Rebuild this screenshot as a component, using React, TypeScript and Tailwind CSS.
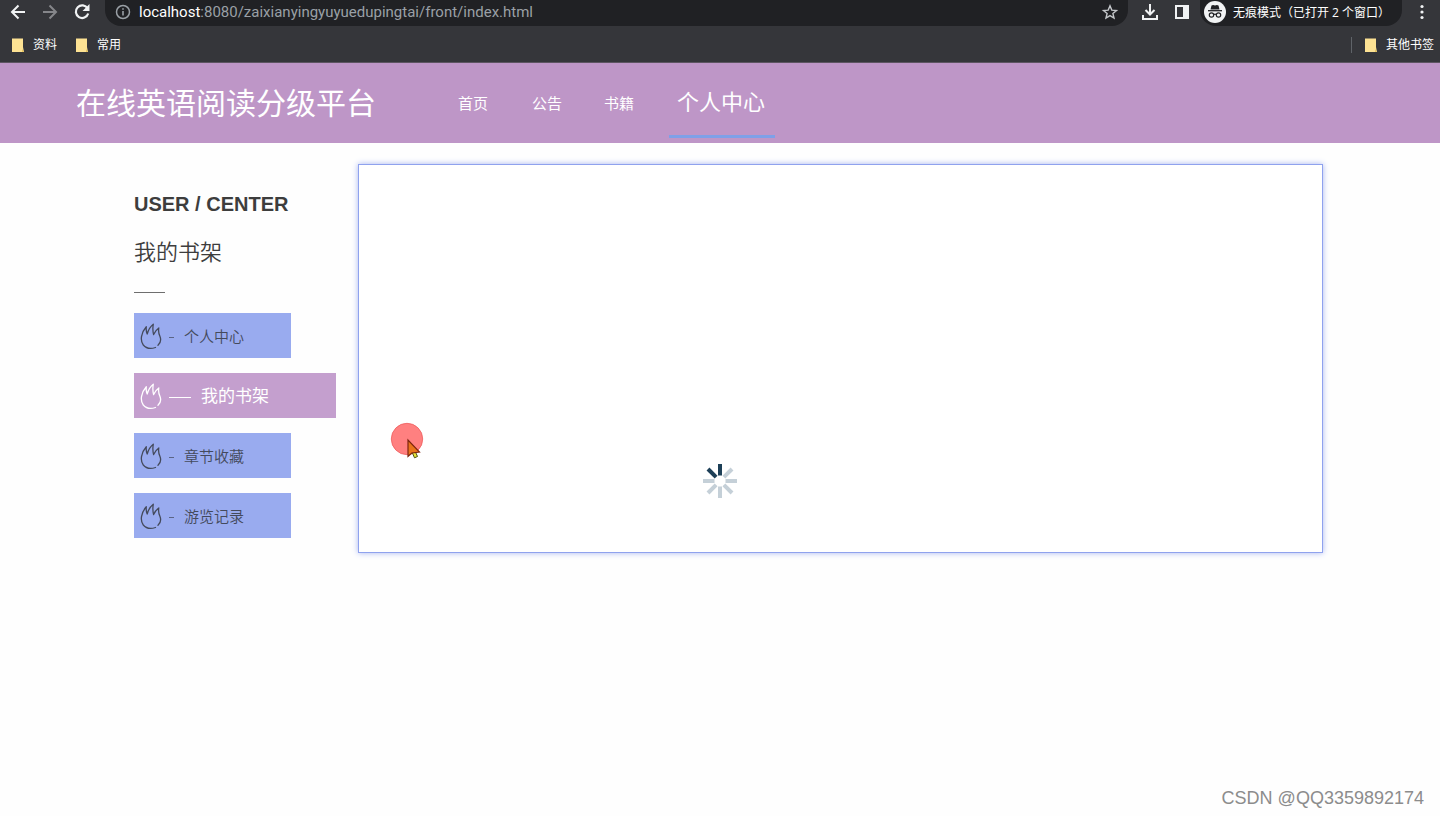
import React from "react";

const cjk = "font-['Open_Sans','Noto_Sans_CJK_SC',sans-serif]";

function Folder() {
  return (
    <svg width="14" height="16" viewBox="0 0 14 16" aria-hidden="true">
      <path d="M1 1.500H12V10L13 15H1Z" fill="#fde293" />
      <path d="M11 12L13 15H11Z" fill="#e8c45c" />
    </svg>
  );
}

function Bookmark({ label }: { label: string }) {
  return (
    <a href="#bookmark" className="flex items-center gap-2 text-xs leading-5 text-white">
      <Folder />
      <span>{label}</span>
    </a>
  );
}

function BrowserBar() {
  return (
    <div className="h-[63px] overflow-hidden border-b border-[#5d5562] bg-[#35363a] text-white">
      <div className="flex h-[26px] items-center">
        <div className="flex w-[105px] shrink-0 items-center gap-3 pb-[2px] pl-2">
          <button type="button" aria-label="后退">
            <svg width="20" height="20" viewBox="0 0 20 20" fill="none" stroke="#f1f3f4" strokeWidth="2">
              <path d="M17 10H4M10.500 3.500L4 10L10.500 16.500" />
            </svg>
          </button>
          <button type="button" aria-label="前进">
            <svg width="20" height="20" viewBox="0 0 20 20" fill="none" stroke="#85868a" strokeWidth="2">
              <path d="M3 10H16M9.500 3.500L16 10L9.500 16.500" />
            </svg>
          </button>
          <button type="button" aria-label="重新加载">
            <svg width="20" height="20" viewBox="0 0 20 20" fill="none">
              <path d="M15.600 6.500A6.300 6.300 0 1 0 16.200 11.500" stroke="#f1f3f4" strokeWidth="2.200" />
              <path d="M17.500 2V9H10.500Z" fill="#f1f3f4" />
            </svg>
          </button>
        </div>
        <div className="flex h-[26px] min-w-0 flex-1 items-center rounded-b-2xl bg-[#202124] pb-[2px] pl-[10px] pr-2">
          <svg width="16" height="16" viewBox="0 0 16 16" fill="none" className="shrink-0" aria-hidden="true">
            <circle cx="8" cy="8" r="6.500" stroke="#9aa0a6" strokeWidth="1.500" />
            <path d="M8 7V11.500M8 4.200V5.800" stroke="#9aa0a6" strokeWidth="1.600" />
          </svg>
          <div className="min-w-0 flex-1 truncate pl-2 font-['Roboto',sans-serif] text-[15px] leading-6 text-[#9aa0a6]">
            <span className="text-white">localhost</span>:8080/zaixianyingyuyuedupingtai/front/index.html
          </div>
          <button type="button" aria-label="为此页添加书签">
            <svg width="20" height="20" viewBox="0 0 20 20" fill="none" stroke="#c4c7ca" strokeWidth="1.400">
              <path d="M10 3.800L11.800 8.100L16.500 8.500L12.900 11.500L14 16L10 13.600L6 16L7.100 11.500L3.500 8.500L8.200 8.100Z" />
            </svg>
          </button>
        </div>
        <div className="flex h-[26px] shrink-0 items-center pb-[2px] pl-3">
          <button type="button" aria-label="下载内容">
            <svg width="20" height="20" viewBox="0 0 20 20" fill="none" stroke="#f1f3f4" strokeWidth="2">
              <path d="M10 2V12M5.500 8L10 12.500L14.500 8M3 13V17H17V13" />
            </svg>
          </button>
          <button type="button" aria-label="侧边栏" className="pl-3">
            <svg width="20" height="20" viewBox="0 0 20 20">
              <path d="M3 3H17V17H3ZM5 5V15H11V5Z" fill="#f1f3f4" fillRule="evenodd" />
            </svg>
          </button>
        </div>
        <button
          type="button"
          className="ml-2 flex h-[26px] w-[202px] shrink-0 items-center gap-[7px] rounded-b-2xl bg-[#202124] pb-[2px] pl-1 text-xs leading-5"
        >
          <svg width="22" height="22" viewBox="0 0 22 22" className="shrink-0" aria-hidden="true">
            <circle cx="11" cy="11" r="11" fill="#f1f3f4" />
            <path d="M7.500 4.500Q9 3.700 11 4.500Q13 3.700 14.500 4.500L15.500 8.500H6.500Z" fill="#202124" />
            <path d="M4 9.700H18" stroke="#202124" strokeWidth="1.300" />
            <g fill="none" stroke="#202124" strokeWidth="1.200">
              <circle cx="7.500" cy="14" r="2.200" />
              <circle cx="14.500" cy="14" r="2.200" />
              <path d="M9.700 13.600Q11 12.800 12.300 13.600" />
            </g>
          </svg>
          <span className="whitespace-nowrap pt-[2px]">无痕模式（已打开 2 个窗口）</span>
        </button>
        <button type="button" aria-label="菜单" className="flex w-[38px] shrink-0 justify-center pb-[2px] pl-[2px]">
          <svg width="20" height="20" viewBox="0 0 20 20" fill="#f1f3f4">
            <circle cx="10" cy="4.500" r="1.600" />
            <circle cx="10" cy="10" r="1.600" />
            <circle cx="10" cy="15.500" r="1.600" />
          </svg>
        </button>
      </div>
      <div className="flex h-9 items-center gap-[18px] pl-[11px] pr-[6px] pt-px">
        <Bookmark label="资料" />
        <Bookmark label="常用" />
        <div className="ml-auto flex items-center gap-3">
          <span className="h-4 w-px bg-[#5f6368]" />
          <Bookmark label="其他书签" />
        </div>
      </div>
    </div>
  );
}

function SiteHeader() {
  return (
    <header className="flex h-20 items-center bg-[#be96c7] pl-[76px] text-white">
      <h1 className="w-[364px] shrink-0 text-[30px] leading-10">在线英语阅读分级平台</h1>
      <nav className="flex h-20 items-center text-[15px] leading-6">
        <a href="#home" className="w-[74px] pl-[18px]">首页</a>
        <a href="#notice" className="w-[74px] pl-[18px]">公告</a>
        <a href="#books" className="w-[74px] pl-4">书籍</a>
        <a
          href="#center"
          aria-current="page"
          className="ml-[7px] flex h-[75px] w-[106px] items-center self-start border-b-3 border-[#7ea0e8] pl-2 pt-1 text-[22px] leading-8"
        >
          个人中心
        </a>
      </nav>
    </header>
  );
}

function Flame() {
  return (
    <svg
      width="24"
      height="28"
      viewBox="0 0 24 28"
      fill="none"
      stroke="currentColor"
      strokeWidth="1.300"
      strokeLinecap="round"
      strokeLinejoin="round"
      className="shrink-0"
      aria-hidden="true"
    >
      <path d="M16.500 25.500C12 27 7 26.300 4.300 23C1 18.500 1.800 11 7.300 4.800Q6.800 8.500 8.200 12Q10 5.500 14.300 2.200Q13.300 7.500 14.600 12.500Q16.300 8.500 19.800 6Q19 10.500 21 14.500C22.300 18 21.500 21 19 23.200" />
    </svg>
  );
}

function SideLink({ label, active = false }: { label: string; active?: boolean }) {
  return (
    <a
      href="#section"
      aria-current={active ? "page" : undefined}
      className={
        active
          ? "flex h-[45px] w-[202px] items-center bg-[#c49fce] pl-[5px] text-[17px] leading-6 text-white"
          : "flex h-[45px] w-[157px] items-center bg-[#99abef] pl-[5px] text-[15px] leading-6 text-[#444a5c]"
      }
    >
      <Flame />
      <span
        className={
          active ? "ml-[6px] mr-[10px] mt-1 h-px w-[22px] bg-white" : "ml-[6px] mr-[10px] mt-1 h-px w-[5px] bg-[#5a6486]"
        }
      />
      <span className={active ? "" : "font-[350]"}>{label}</span>
    </a>
  );
}

function Spinner() {
  const spokes = [0, 45, 90, 135, 180, 225, 270, 315];
  return (
    <svg width="34" height="34" viewBox="0 0 34 34" role="img" aria-label="加载中">
      {spokes.map((a) => (
        <rect
          key={a}
          x="15"
          y="0"
          width="4"
          height="11.500"
          fill={a === 0 || a === 315 ? "#1d3f57" : "#c5d0d8"}
          transform={`rotate(${a} 17 17)`}
        />
      ))}
    </svg>
  );
}

function Pointer() {
  return (
    <svg width="34" height="38" viewBox="0 0 34 38" aria-hidden="true">
      <circle cx="17" cy="17" r="15.700" fill="#ff8080" stroke="#ef5d5d" strokeWidth="0.800" />
      <path d="M22 30L25 29L27.500 34.500L24.500 35.800Z" fill="#e8e337" stroke="#4c5210" strokeWidth="1" />
      <path d="M18 18V34.500L21.800 31L29.500 30Z" fill="#e8741c" stroke="#7d2410" strokeWidth="1.200" />
    </svg>
  );
}

export default function App() {
  return (
    <div className={`relative flex min-h-screen flex-col bg-[#fefefe] ${cjk}`}>
      <BrowserBar />
      <SiteHeader />
      <main className="flex items-start pl-[134px] pr-[117px] pt-[21px]">
        <aside className="w-[224px] shrink-0 pt-[26px] text-[#3d3d3d]">
          <p className="font-['Liberation_Sans',Arial,sans-serif] text-xl font-bold leading-7">USER / CENTER</p>
          <h2 className="mt-[17px] text-[22px] font-[350] leading-8">我的书架</h2>
          <div className="mt-[25px] h-px w-[31px] bg-[#6e6e6e]" />
          <nav className="mt-5 flex flex-col gap-[15px]">
            <SideLink label="个人中心" />
            <SideLink label="我的书架" active />
            <SideLink label="章节收藏" />
            <SideLink label="游览记录" />
          </nav>
        </aside>
        <section className="min-h-[389px] min-w-0 flex-1 border border-[#8fa2ee] bg-white shadow-[0_0_6px_#a8b6f2]" />
      </main>
      <div className="absolute left-1/2 top-[464px] -translate-x-1/2">
        <Spinner />
      </div>
      <div className="absolute left-[390px] top-[422px]">
        <Pointer />
      </div>
      <p className="absolute bottom-1 right-4 font-['Liberation_Sans',Arial,sans-serif] text-[18px] leading-7 text-[#8c8c8c]">
        CSDN @QQ3359892174
      </p>
    </div>
  );
}
